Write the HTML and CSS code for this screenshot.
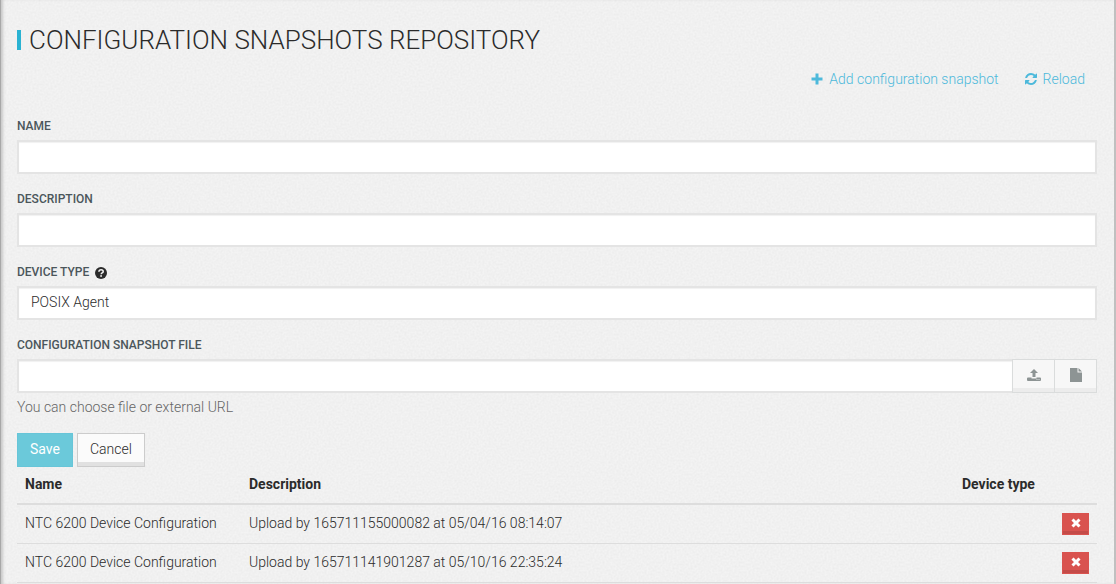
FILE: index.html
```html
<!DOCTYPE html>
<html lang="en">
<head>
<meta charset="utf-8">
<title>Configuration snapshots repository</title>
<link rel="stylesheet" href="styles.css">
</head>
<body>
<main class="panel">
  <h1 class="title">Configuration snapshots repository</h1>
  <nav class="actions">
    <a class="action" href="#add"><svg class="icon" viewBox="0 0 12 12" aria-hidden="true"><path d="M4.500 0.500h3v4H11.500v3H7.500V11.500h-3V7.500H0.500v-3h4z"/></svg>Add configuration snapshot</a>
    <a class="action" href="#reload"><svg class="icon" viewBox="0 0 1536 1536" aria-hidden="true"><path d="M1511 928q0 5-1 7-64 268-268 434.500T764 1536q-146 0-282.500-55T238 1324l-129 129q-19 19-45 19t-45-19-19-45V960q0-26 19-45t45-19h448q26 0 45 19t19 45-19 45l-137 137q71 66 161 102t187 36q134 0 250-65t186-179q11-17 53-117 8-23 30-23h192q13 0 22.500 9.500t9.500 22.500zm25-800v448q0 26-19 45t-45 19h-448q-26 0-45-19t-19-45 19-45l138-138Q969 256 768 256q-134 0-250 65T332 500q-11 17-53 117-8 23-30 23H50q-13 0-22.500-9.500T18 608v-7q65-268 270-434.500T768 0q146 0 284 55.500T1297 212l130-129q19-19 45-19t45 19 19 45z"/></svg>Reload</a>
  </nav>
  <form class="form">
    <div class="field">
      <label class="label" for="name">Name</label>
      <input class="control" id="name" type="text">
    </div>
    <div class="field">
      <label class="label" for="description">Description</label>
      <input class="control" id="description" type="text">
    </div>
    <div class="field">
      <label class="label" for="device-type">Device type
        <svg class="icon help-icon" viewBox="0 0 12 12" aria-hidden="true"><circle cx="6" cy="6" r="6"/><path class="mark" d="M3.900 4.700C4 3.400 4.800 2.700 6.100 2.700c1.300 0 2.100.7 2.100 1.700 0 1.500-2 1.500-2 2.800"/><path class="dot" d="M5.200 8.200h1.800v1.600H5.200z"/></svg>
      </label>
      <select class="control" id="device-type"><option>POSIX Agent</option></select>
    </div>
    <div class="field">
      <label class="label" for="file">Configuration snapshot file</label>
      <div class="input-group">
        <input class="control" id="file" type="text">
        <button class="addon" type="button" aria-label="Upload file"><svg class="icon addon-icon" viewBox="0 0 14 14" aria-hidden="true"><path d="M7 1l4 4H8.500v4h-3V5H3zM1 9.500h3.500V10.500h5V9.500H13a1 1 0 0 1 1 1V12a1 1 0 0 1-1 1H1a1 1 0 0 1-1-1v-1.500a1 1 0 0 1 1-1zM9.500 11.300v.8h1v-.8zm2 0v.8h1v-.8z"/></svg></button>
        <button class="addon" type="button" aria-label="Choose file"><svg class="icon addon-icon" viewBox="0 0 14 14" aria-hidden="true"><path d="M1 0h7.500v4.500H13V14H1zM9.500 0L13 3.500H9.500z"/></svg></button>
      </div>
      <p class="help">You can choose file or external URL</p>
    </div>
    <div class="buttons">
      <button class="btn btn-save" type="submit">Save</button>
      <button class="btn btn-cancel" type="button">Cancel</button>
    </div>
  </form>
  <table class="table">
    <thead>
      <tr><th class="col-name">Name</th><th>Description</th><th class="col-type">Device type</th><th class="col-remove"></th></tr>
    </thead>
    <tbody>
      <tr>
        <td>NTC 6200 Device Configuration</td><td>Upload by 165711155000082 at 05/04/16 08:14:07</td><td></td>
        <td class="cell-remove"><button class="remove" type="button" aria-label="Delete"><svg class="remove-icon" viewBox="0 0 10 10" aria-hidden="true"><path d="M1.500 1.500l7 7M8.500 1.500l-7 7"/></svg></button></td>
      </tr>
      <tr>
        <td>NTC 6200 Device Configuration</td><td>Upload by 165711141901287 at 05/10/16 22:35:24</td><td></td>
        <td class="cell-remove"><button class="remove" type="button" aria-label="Delete"><svg class="remove-icon" viewBox="0 0 10 10" aria-hidden="true"><path d="M1.500 1.500l7 7M8.500 1.500l-7 7"/></svg></button></td>
      </tr>
      <tr class="last"><td colspan="4"></td></tr>
    </tbody>
  </table>
</main>
</body>
</html>
```

FILE: styles.css
```css
* { box-sizing: border-box; }

html { overflow: hidden; }

body {
  margin: 0;
  background: #f3f3f3;
  color: #2b2b2b;
  font: 300 14px/20px Roboto, "Liberation Sans", sans-serif;
}

.panel {
  min-height: 100vh;
  padding: 24px 17px 0 16px;
  border-left: 1px solid #a8a8a8;
  border-right: 2px solid #c0c0c0;
  box-shadow: inset 3px 0 3px -1px #c8c8c8;
  background-image: url("data:image/svg+xml,%3Csvg xmlns='http://www.w3.org/2000/svg' width='160' height='160'%3E%3Cfilter id='n'%3E%3CfeTurbulence type='fractalNoise' baseFrequency='.5' numOctaves='2' stitchTiles='stitch'/%3E%3CfeColorMatrix values='0 0 0 0 0 0 0 0 0 0 0 0 0 0 0 .05 0 0 0 -.015'/%3E%3C/filter%3E%3Crect width='160' height='160' filter='url(%23n)'/%3E%3C/svg%3E");
}

.title {
  display: flex;
  align-items: center;
  gap: 8px;
  margin: 0;
  font-size: 26px;
  line-height: 32px;
  font-weight: 300;
  text-transform: uppercase;
}

.title::before {
  content: "";
  width: 4px;
  height: 20px;
  background: #29b2d2;
}

.icon {
  width: 12px;
  height: 12px;
  fill: currentColor;
}

.actions {
  display: flex;
  justify-content: flex-end;
  gap: 26px;
  padding: 13px 12px 28px 0;
}

.action {
  display: flex;
  align-items: center;
  gap: 6px;
  color: #4db9db;
  text-decoration: none;
}

.field { margin-bottom: 15px; }

.label {
  display: flex;
  align-items: center;
  gap: 6px;
  margin-bottom: 4px;
  color: #4b565b;
  font-size: 12px;
  line-height: 19px;
  font-weight: 500;
  text-transform: uppercase;
}

.field + .field { margin-top: 16px; }
.field { margin-bottom: 0; }

.help-icon { color: #2b2b2b; }
.help-icon .mark { fill: none; stroke: #f1f1f1; stroke-width: 1.600; }
.help-icon .dot { fill: #f1f1f1; }

.control {
  display: block;
  width: 100%;
  height: 34px;
  padding: 0 12px 2px;
  border: 2px solid #e4e4e4;
  border-radius: 0;
  appearance: none;
  background: #fff;
  box-shadow: inset 0 1px 1px #f1f1f1;
  color: #2b2b2b;
  font: inherit;
}

.input-group { display: flex; }
.input-group .control { flex: 1; border-right: 0; }

.addon {
  display: flex;
  align-items: center;
  justify-content: center;
  width: 43px;
  padding: 0 0 2px;
  border: 1px solid #dadcdc;
  background: #f7f7f7;
  box-shadow: inset 0 -4px #ececec;
  color: #8d9494;
}

.addon + .addon { margin-left: -1px; }

.addon-icon { width: 14px; height: 14px; }

.help {
  margin: 4px 0 16px;
  color: #666;
}

.buttons { display: flex; gap: 4px; }

.btn {
  height: 34px;
  padding: 0 12px 2px;
  border: 1px solid #ccc;
  font: inherit;
}

.btn-save {
  border-color: #67c5d8;
  background: #6bc9da;
  color: #fff;
  font-weight: 400;
}

.btn-cancel {
  background: #fbfbfb;
  box-shadow: inset 0 -4px #e1e1e1;
  color: #2b2b2b;
}

.table {
  width: 100%;
  table-layout: fixed;
  border-collapse: collapse;
}

.table th,
.table td {
  padding: 8px;
  text-align: left;
  vertical-align: top;
}

.table th {
  padding: 7px 8px 9px;
  border-bottom: 2px solid #ddd;
  font-weight: 700;
}

.table td { border-top: 1px solid #ddd; }
.table .last td { padding: 0; }
.table .col-name { width: 224px; }
.table .col-type { width: 100px; }
.table .col-remove { width: 43px; }
.table .cell-remove { padding-left: 0; }

.remove {
  display: flex;
  align-items: center;
  justify-content: center;
  width: 27px;
  height: 22px;
  margin-left: auto;
  padding: 0 0 2px;
  border: 1px solid #d9534f;
  background: #d9534f;
  box-shadow: inset 0 -3px #c44b48;
}

.remove-icon {
  width: 10px;
  height: 10px;
  fill: none;
  stroke: #fff;
  stroke-width: 3;
}
```
